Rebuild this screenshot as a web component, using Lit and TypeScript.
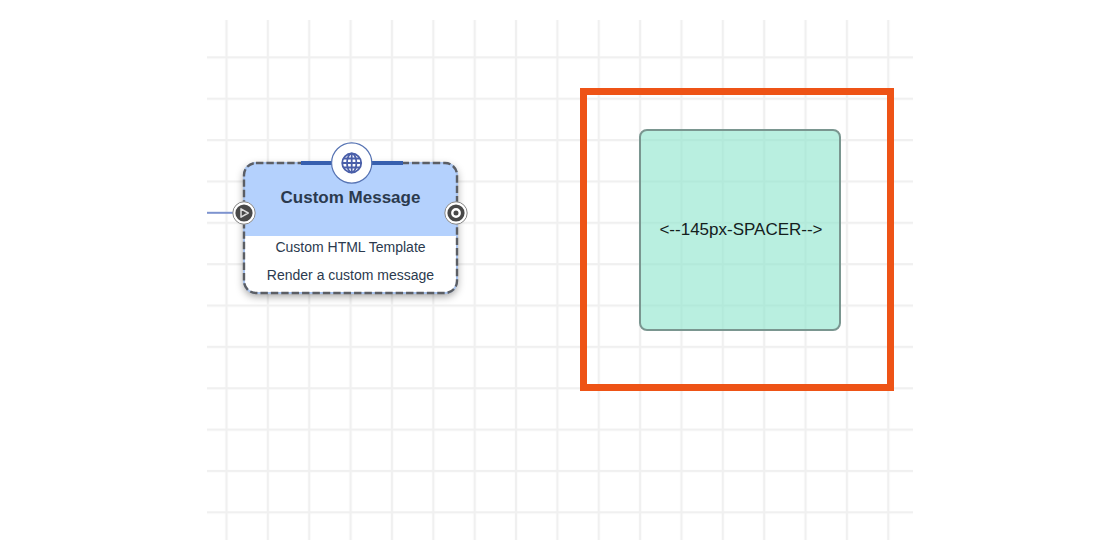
import { LitElement, html, css, svg } from "lit";
import { customElement } from "lit/decorators.js";

@customElement("flow-node")
class FlowNode extends LitElement {
  static styles = css`
    :host { display: block; position: relative; color: #2b3a4e; font-family: "Liberation Sans", Arial, sans-serif; }
    .shadow { border-radius: 12px; box-shadow: 0 3px 9px rgba(0, 0, 0, 0.4); }
    .card { display: flex; flex-direction: column; border-radius: 12px; background: #fff; overflow: hidden; }
    .title { margin: 0; padding: 24px 0 27px; background: #b4d1fd; font-size: 17px; line-height: 22px; font-weight: 700; text-align: center; }
    .lines { display: flex; flex-direction: column; gap: 6px; padding-bottom: 7px; }
    .line { margin: 0; font-size: 14px; line-height: 22px; text-align: center; white-space: nowrap; }
    .frame { position: absolute; inset: 0; width: 100%; height: 100%; overflow: visible; }
    .badge { position: absolute; left: 87px; top: -21px; }
    .port { position: absolute; top: 38px; }
    .in { left: -12px; }
    .out { right: -11px; }
  `;
  render() {
    return html`
      <div class="shadow"><div class="card">
        <h2 class="title">Custom Message</h2>
        <div class="lines">
          <p class="line">Custom HTML Template</p>
          <p class="line">Render a custom message</p>
        </div>
      </div></div>
      <svg class="frame" viewBox="0 0 213 130" preserveAspectRatio="none" aria-hidden="true">
        <rect width="213" height="130" rx="12" fill="none" stroke="#a9c4ee" stroke-width="2"/>
        <rect width="213" height="130" rx="12" fill="none" stroke="#5b5e64" stroke-width="2.4" stroke-dasharray="7.4 3"/>
        <path d="M57 0H159" stroke="#375fae" stroke-width="4"/>
      </svg>
      <svg class="badge" width="42" height="42" viewBox="0 0 42 42" aria-hidden="true">
        <circle cx="20.7" cy="21" r="20.1" fill="#fff" stroke="#5673b3" stroke-width="1.2"/>
        <g transform="translate(-.3 0)" fill="none" stroke="#4a5fa9" stroke-width="1.8"><circle cx="21" cy="21" r="9.5"/><ellipse cx="21" cy="21" rx="4.7" ry="9.5"/><path d="M11.5 21H30.5M21 11.5V30.5M13 16.5H29M13 25.5H29"/></g>
      </svg>
      ${this.port("in")}${this.port("out")}
    `;
  }
  port(kind: string) {
    return html`<svg class="port ${kind}" width="24" height="24" viewBox="0 0 24 24" aria-hidden="true">
      <circle cx="12" cy="12" r="11.2" fill="#fff" stroke="#888" stroke-width="1"/>
      <circle cx="12" cy="12" r="8.6" fill="#484848"/>
      ${kind === "in"
        ? svg`<path d="M9 7.8L16.2 12L9 16.2Z" fill="none" stroke="#ddd" stroke-width="1.5" stroke-linejoin="round"/>`
        : svg`<circle cx="12" cy="12" r="3.7" fill="none" stroke="#fff" stroke-width="2.4"/>`}
    </svg>`;
  }
}

@customElement("app-root")
class AppRoot extends LitElement {
  static styles = css`
    :host { display: block; background: #fff; font-family: "Liberation Sans", Arial, sans-serif; }
    .page { display: flex; justify-content: center; padding: 20px; }
    .canvas { position: relative; width: 100%; max-width: 706px; min-height: 520px; overflow: hidden; }
    .grid { position: absolute; inset: 0; width: 100%; height: 100%; }
    .node { position: absolute; left: 37px; top: 143px; width: 213px; }
    .callout { position: absolute; left: 373px; top: 68px; box-sizing: border-box; padding: 34px 46px 53px 52px; border: 7px solid #ee5316; }
    .spacer { box-sizing: border-box; display: flex; align-items: center; justify-content: center; width: 202px; height: 202px; padding-left: 2px; border: 2px solid #7a9690; border-radius: 8px; background: rgba(142, 229, 205, 0.62); color: #14201d; font-size: 17px; line-height: 22px; white-space: nowrap; }
  `;
  render() {
    return html`<main class="page"><div class="canvas">
      <svg class="grid" aria-hidden="true">
        <defs>
          <pattern id="cells" x="-1.2" y="16.6" width="41.36" height="41.36" patternUnits="userSpaceOnUse">
            <path d="M20.7 0V41.36M0 20.7H41.36" stroke="#000" stroke-opacity="0.06" stroke-width="2.2"/>
          </pattern>
        </defs>
        <rect width="100%" height="100%" fill="url(#cells)"/>
        <path d="M0 192.8H30" stroke="#7d93cf" stroke-width="2"/>
      </svg>
      <flow-node class="node"></flow-node>
      <section class="callout"><div class="spacer">&lt;--145px-SPACER--&gt;</div></section>
    </div></main>`;
  }
}
